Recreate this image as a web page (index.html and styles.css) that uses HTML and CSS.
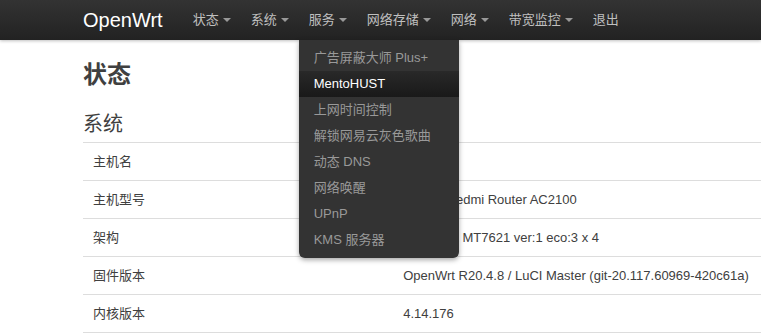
FILE: index.html
```html
<!DOCTYPE html>
<html lang="zh-CN">
<head>
    <meta charset="UTF-8">
    <title>OpenWrt - 状态</title>
    <link rel="stylesheet" href="styles.css">
</head>
<body>
    <div class="topbar">
        <div class="topbar-inner">
            <a class="brand" href="#">OpenWrt</a>
            <ul class="nav">
                <li class="dropdown"><a href="#">状态<span class="caret"></span></a></li>
                <li class="dropdown"><a href="#">系统<span class="caret"></span></a></li>
                <li class="dropdown open">
                    <a href="#">服务<span class="caret"></span></a>
                    <ul class="dropdown-menu">
                        <li><a href="#">广告屏蔽大师 Plus+</a></li>
                        <li class="active"><a href="#">MentoHUST</a></li>
                        <li><a href="#">上网时间控制</a></li>
                        <li><a href="#">解锁网易云灰色歌曲</a></li>
                        <li><a href="#">动态 DNS</a></li>
                        <li><a href="#">网络唤醒</a></li>
                        <li><a href="#">UPnP</a></li>
                        <li><a href="#">KMS 服务器</a></li>
                    </ul>
                </li>
                <li class="dropdown"><a href="#">网络存储<span class="caret"></span></a></li>
                <li class="dropdown"><a href="#">网络<span class="caret"></span></a></li>
                <li class="dropdown"><a href="#">带宽监控<span class="caret"></span></a></li>
                <li><a href="#">退出</a></li>
            </ul>
        </div>
    </div>

    <div class="container">
        <h1>状态</h1>
        <h2>系统</h2>
        <table class="info">
            <tr><td class="key">主机名</td><td>OpenWrt</td></tr>
            <tr><td class="key">主机型号</td><td>Xiaomi Redmi Router AC2100</td></tr>
            <tr><td class="key">架构</td><td>MediaTek MT7621 ver:1 eco:3 x 4</td></tr>
            <tr><td class="key">固件版本</td><td>OpenWrt R20.4.8 / LuCI Master (git-20.117.60969-420c61a)</td></tr>
            <tr><td class="key">内核版本</td><td>4.14.176</td></tr>
        </table>
    </div>
</body>
</html>
```

FILE: styles.css
```css
body {
    margin: 0;
    font-family: "Liberation Sans", Arial, "Noto Sans CJK SC", sans-serif;
    font-size: 13px;
    line-height: 18px;
    color: #404040;
    background: #fff;
}
a {
    text-decoration: none;
}
.topbar {
    height: 40px;
    background: linear-gradient(to bottom, #333333, #222222);
    box-shadow: 0 1px 3px rgba(0, 0, 0, 0.25);
    position: relative;
    z-index: 10;
}
.topbar-inner {
    display: flex;
    align-items: center;
    height: 40px;
    padding-left: 83px;
}
.brand {
    color: #ffffff;
    font-size: 20px;
    line-height: 40px;
    margin-right: 20px;
}
.nav {
    display: flex;
    list-style: none;
    margin: 0;
    padding: 0;
}
.nav > li {
    position: relative;
}
.nav > li > a {
    display: block;
    padding: 0 10px;
    line-height: 40px;
    color: #bfbfbf;
}
.caret {
    display: inline-block;
    width: 0;
    height: 0;
    margin-left: 4px;
    vertical-align: middle;
    border-left: 4px solid transparent;
    border-right: 4px solid transparent;
    border-top: 4px solid #999;
    position: relative;
    top: -1px;
}
.dropdown-menu {
    position: absolute;
    top: 40px;
    left: 0;
    width: 160px;
    margin: 0;
    padding: 5px 0;
    list-style: none;
    background: #333333;
    border-radius: 0 0 6px 6px;
    box-shadow: 0 2px 5px rgba(0, 0, 0, 0.35);
}
.dropdown-menu a {
    display: block;
    padding: 4px 15px;
    line-height: 18px;
    color: #999999;
    white-space: nowrap;
}
.dropdown-menu .active a {
    color: #ffffff;
    background: linear-gradient(to bottom, #292929, #191919);
}
.container {
    padding: 17px 0 0 83px;
}
h1 {
    margin: 0;
    font-size: 24px;
    line-height: 36px;
    font-weight: bold;
}
h2 {
    margin: 16px 0 3px;
    font-size: 20px;
    line-height: 30px;
    font-weight: normal;
}
.info {
    width: 940px;
    border-collapse: collapse;
}
.info td {
    padding: 10px 10px 9px;
    border-top: 1px solid #dddddd;
    border-bottom: 1px solid #dddddd;
    text-align: left;
    vertical-align: top;
}
.info .key {
    width: 33%;
}
```
